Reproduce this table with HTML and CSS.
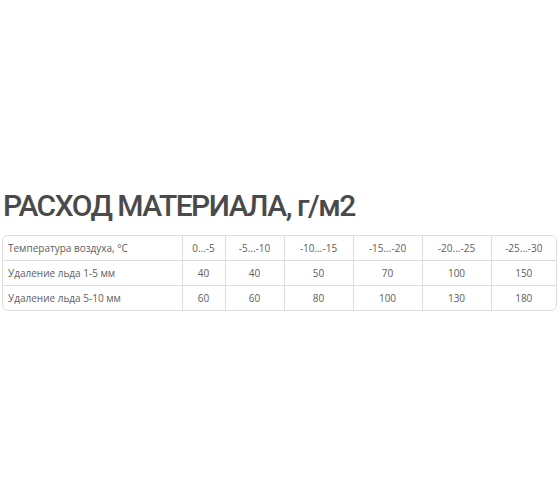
FILE: index.html
```html
<!DOCTYPE html>
<html lang="ru">
<head>
<meta charset="utf-8">
<link rel="stylesheet" href="styles.css">
</head>
<body>
<div class="page">
  <h1 class="title">РАСХОД МАТЕРИАЛА, г/м2</h1>
  <div class="table-wrap">
    <table class="usage">
      <colgroup>
        <col class="c-label"><col class="c1"><col class="c2"><col class="c3"><col class="c3"><col class="c3"><col class="c4">
      </colgroup>
      <tr>
        <td class="label">Температура воздуха, °С</td>
        <td>0...-5</td><td>-5...-10</td><td>-10...-15</td><td>-15...-20</td><td>-20...-25</td><td>-25...-30</td>
      </tr>
      <tr>
        <td class="label">Удаление льда 1-5 мм</td>
        <td>40</td><td>40</td><td>50</td><td>70</td><td>100</td><td>150</td>
      </tr>
      <tr>
        <td class="label">Удаление льда 5-10 мм</td>
        <td>60</td><td>60</td><td>80</td><td>100</td><td>130</td><td>180</td>
      </tr>
    </table>
  </div>
</div>
</body>
</html>
```
FILE: styles.css
```css
html, body {
  margin: 0;
  padding: 0;
  background: #fff;
}
.page {
  width: 560px;
  height: 504px;
  padding-top: 186px;
  box-sizing: border-box;
  font-family: "Open Sans", "Liberation Sans", sans-serif;
}
.title {
  margin: 0 0 0 3px;
  font-family: Roboto, "Open Sans", sans-serif;
  font-size: 30px;
  line-height: 40px;
  font-weight: 500;
  color: #4a4a4a;
  letter-spacing: -1.5px;
}
.table-wrap {
  margin: 9px 3px 0 2px;
  border: 1px solid #dedede;
  border-radius: 6px;
  overflow: hidden;
}
.usage {
  width: 100%;
  border-collapse: collapse;
  table-layout: fixed;
  font-size: 10px;
  color: #5e5e5e;
}
.c-label { width: 179px; }
.c1 { width: 43px; }
.c2 { width: 59px; }
.c3 { width: 69px; }
.c4 { width: auto; }
.usage td {
  height: 24px;
  padding: 0;
  text-align: center;
  border-right: 1px solid #dedede;
  border-bottom: 1px solid #dedede;
}
.usage td:last-child { border-right: none; }
.usage tr:last-child td { border-bottom: none; }
.usage td.label {
  text-align: left;
  padding-left: 5px;
}
```
